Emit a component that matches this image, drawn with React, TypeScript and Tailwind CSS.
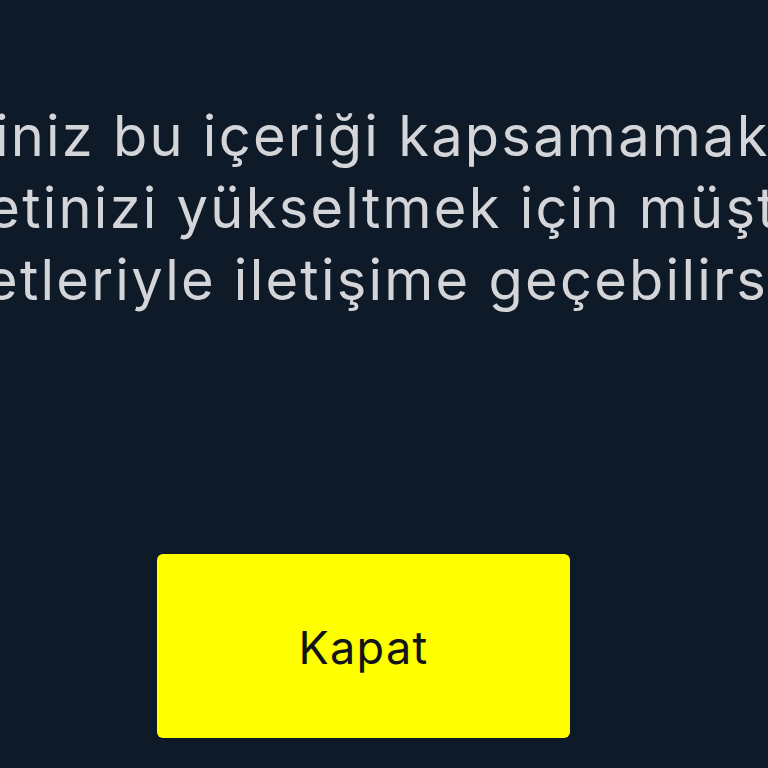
export default function App() {
  const lines = [
    'Paketiniz bu içeriği kapsamamaktadır',
    'Paketinizi yükseltmek için müşteri',
    'hizmetleriyle iletişime geçebilirsiniz.',
  ];

  return (
    <div className="h-screen w-full overflow-hidden bg-[#0e1a27] font-['Inter','Noto_Sans',sans-serif]">
      {/* Message */}
      <div className="flex w-[736px] flex-col items-center pt-[100px] text-[56px] leading-[72px] tracking-[0.04em] text-[#d3d5d9]">
        {lines.map((line) => (
          <p key={line} className="whitespace-nowrap">
            {line}
          </p>
        ))}
      </div>

      {/* Close button */}
      <div className="mt-[238px] pl-[157px]">
        <button className="flex h-[184px] w-[413px] items-center justify-center rounded-md bg-[#ffff00] pt-[3px] text-[45px] tracking-[0.03em] text-[#111418]">
          Kapat
        </button>
      </div>
    </div>
  );
}
